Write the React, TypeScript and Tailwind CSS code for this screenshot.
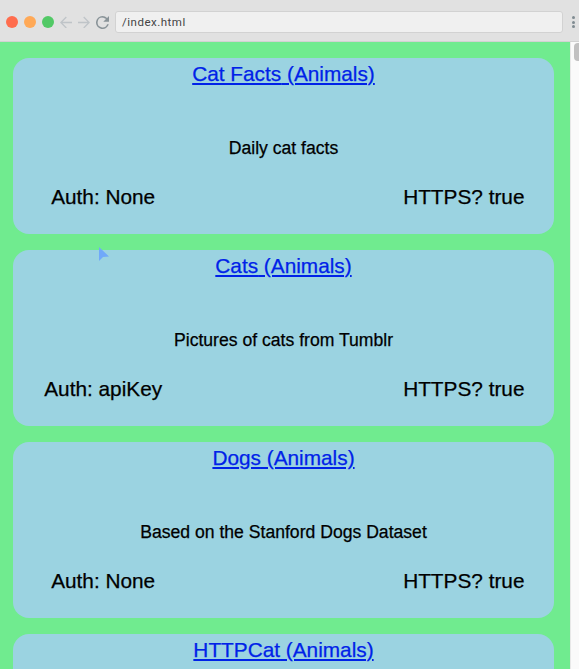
interface Api {
  name: string;
  description?: string;
  auth?: string;
}

const apis: Api[] = [
  { name: 'Cat Facts', description: 'Daily cat facts', auth: 'None' },
  { name: 'Cats', description: 'Pictures of cats from Tumblr', auth: 'apiKey' },
  { name: 'Dogs', description: 'Based on the Stanford Dogs Dataset', auth: 'None' },
  { name: 'HTTPCat' },
];

function Toolbar() {
  return (
    <header className="flex h-[42px] shrink-0 items-center border-b border-[#d2d2d2] bg-[#e1e1e1] pt-[3px] pl-1.5">
      <div className="flex gap-1.5">
        <span className="size-3 rounded-full bg-[#ff6d4e]" />
        <span className="size-3 rounded-full bg-[#ffa957]" />
        <span className="size-3 rounded-full bg-[#52c966]" />
      </div>
      <svg className="ml-1.5 h-3 w-[30px]" viewBox="0 0 30 12" fill="none" stroke="#bfc4c8" strokeWidth="1.3">
        <path d="M12 6.500H1M6.300 1L.9 6.500 6.300 12M18 6.500h11M23.700 1L29.100 6.500 23.700 12" />
      </svg>
      <svg className="mt-px ml-1.5 size-[13px]" viewBox="4 4 16 16" fill="#899398">
        <path d="M17.650 6.350A7.960 7.960 0 0 0 12 4a8 8 0 1 0 7.730 10h-2.080A6 6 0 1 1 12 6c1.660 0 3.140.69 4.220 1.780L13 11h7V4z" />
      </svg>
      <div className="ml-[6px] flex h-[22px] w-[448px] items-center rounded-[3px] border border-[#d2d2d2] bg-[#f0f0f0] pt-px pl-1.5 font-['Roboto','Liberation_Sans',sans-serif] text-[11.500px] tracking-[0.5px] text-[#444]">
        /index.html
      </div>
      <div className="ml-[9px] flex flex-col gap-[1.500px]">
        <span className="size-[3px] rounded-full bg-[#7f8b91]" />
        <span className="size-[3px] rounded-full bg-[#7f8b91]" />
        <span className="size-[3px] rounded-full bg-[#7f8b91]" />
      </div>
    </header>
  );
}

function ApiCard({ name, description, auth }: Api) {
  return (
    <article className="h-44 shrink-0 rounded-2xl bg-[#9bd3e1] text-center [-webkit-text-stroke:0.25px]">
      <h2 className="h-20 pt-0.5 text-[20.800px] leading-7">
        <a href="#" className="text-[#0022e8] underline decoration-2 underline-offset-2">
          {name} (Animals)
        </a>
      </h2>
      {description && <p className="h-11 text-[17.600px] leading-5">{description}</p>}
      {auth && (
        <div className="grid grid-cols-3 text-[20.800px] leading-[30px]">
          <span>Auth: {auth}</span>
          <span className="col-start-3">HTTPS? true</span>
        </div>
      )}
    </article>
  );
}

export default function App() {
  return (
    <div className="relative flex h-[669px] w-[579px] flex-col overflow-hidden font-['Liberation_Sans',Arial,sans-serif] text-black">
      <Toolbar />
      <div className="flex min-h-0 flex-1">
        <main className="flex w-[570px] shrink-0 flex-col gap-4 overflow-hidden bg-[#70eb8f] pt-4 pr-4 pl-[13px]">
          {apis.map((api) => (
            <ApiCard key={api.name} {...api} />
          ))}
        </main>
        <aside className="flex-1 overflow-hidden border-l border-[#e8e8e8] bg-[#fafafa] pt-px pl-[3px]">
          <div className="h-[18px] w-2 rounded-[4px] bg-[#c1c1c1]" />
        </aside>
      </div>
      <svg className="absolute top-[247px] left-[99px] h-[14px] w-[10px]" viewBox="0 0 10 14" fill="#70a9fa">
        <path d="M0 0L10 9.500L4 10L0 14Z" />
      </svg>
    </div>
  );
}
